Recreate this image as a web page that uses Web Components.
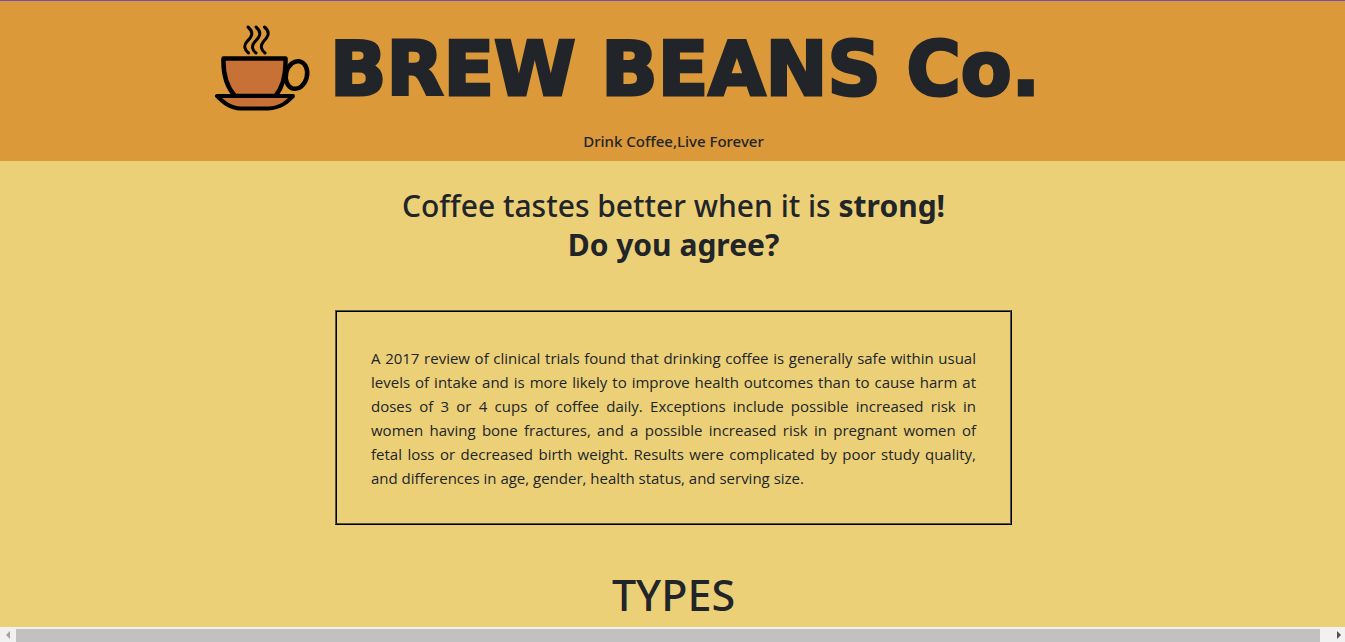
<!DOCTYPE html>
<html lang="en">
<head>
<meta charset="utf-8">
<title>Brew Beans Co.</title>
<style>
body { margin: 0; background: #ebd077; color: #212529; font: 400 16px/24px "Open Sans", "Noto Sans", sans-serif; }
</style>
</head>
<body>
<brew-page>
  <brew-header slot="header">
    <coffee-logo slot="logo"></coffee-logo>
    BREW BEANS Co.
    <span slot="tagline">Drink Coffee,Live Forever</span>
  </brew-header>
  <brew-claim>Coffee tastes better when it is <strong>strong!<br>Do you agree?</strong></brew-claim>
  <brew-note>A 2017 review of clinical trials found that drinking coffee is generally safe within usual levels of intake and is more likely to improve health outcomes than to cause harm at doses of 3 or 4 cups of coffee daily. Exceptions include possible increased risk in women having bone fractures, and a possible increased risk in pregnant women of fetal loss or decreased birth weight. Results were complicated by poor study quality, and differences in age, gender, health status, and serving size.</brew-note>
  <brew-section-title>TYPES</brew-section-title>
  <scroll-strip slot="footer"></scroll-strip>
</brew-page>
<script>
function define(name, html) {
  const template = document.createElement('template');
  template.innerHTML = html;
  customElements.define(name, class extends HTMLElement {
    constructor() {
      super();
      this.attachShadow({ mode: 'open' }).append(template.content.cloneNode(true));
    }
  });
}

define('brew-page', `
<style>
:host { display: flex; flex-direction: column; height: 100vh; }
main { flex: 1; min-height: 0; overflow: hidden; display: flex; flex-direction: column; align-items: center; padding-left: 2px; }
</style>
<slot name="header"></slot>
<main><slot></slot></main>
<slot name="footer"></slot>`);

define('brew-header', `
<style>
:host { display: block; background: #db993a; border-top: 1px solid #6f52b5; padding: 20px 0 8px; }
.brand { display: grid; grid-template-columns: 312px 1fr; column-gap: 18px; align-items: start; }
.logo { display: flex; justify-content: flex-end; }
h1 { margin: 0; font: 700 74px/96px "DejaVu Sans", sans-serif; white-space: nowrap; -webkit-text-stroke: 3px currentColor; }
p { margin: 12px 0 0; padding-left: 2px; text-align: center; font: 500 15px/24px "Noto Sans", sans-serif; }
</style>
<div class="brand">
  <div class="logo"><slot name="logo"></slot></div>
  <h1><slot></slot></h1>
</div>
<p><slot name="tagline"></slot></p>`);

define('coffee-logo', `
<style>
:host { display: block; width: 100px; height: 96px; }
svg { display: block; }
</style>
<svg width="100" height="96" viewBox="212 21 100 96" fill="none" stroke="#000" stroke-linecap="round" stroke-linejoin="round" aria-label="Cup of coffee" role="img">
  <path d="M248 27C255 33 251 38 247 41.500C243 46 245 50 248.500 53M256 27C263 33 259 38 255 41.500C251 46 252 50 256 53M264.500 27C271.500 33 267 38 263.500 41.500C260 46 261 50 265 53" stroke-width="3"/>
  <ellipse cx="296.500" cy="75" rx="10.500" ry="14" transform="rotate(14 296.500 75)" stroke-width="4.500"/>
  <path d="M223.500 58.500H285.500C286 74 283 87 275.500 96H235C226 86 223 73 223.500 58.500Z" fill="#c87137" stroke-width="4.500"/>
  <path d="M217 96H293C288 101 282 108 268 108.500H241C229 108 222 101 217 96Z" fill="#c87137" stroke-width="4"/>
</svg>`);

define('brew-claim', `
<style>
:host { display: block; margin-top: 25px; text-align: center; }
h2 { margin: 0; font: 500 30px/39px "Noto Sans", sans-serif; }
</style>
<h2><slot></slot></h2>`);

define('brew-note', `
<style>
:host { display: block; box-sizing: border-box; width: 677px; max-width: 100%; margin-top: 46px; padding: 34px 34px 33px; border: 2px ridge #000; }
p { margin: 0; font-size: 15px; line-height: 24px; text-align: justify; }
</style>
<p><slot></slot></p>`);

define('brew-section-title', `
<style>
:host { display: block; margin-top: 42px; }
h2 { margin: 0; font: 500 43px/56px "Noto Sans", sans-serif; }
</style>
<h2><slot></slot></h2>`);

define('scroll-strip', `
<style>
:host { display: flex; align-items: center; height: 15px; background: #f1f1f1; }
.end { width: 16px; display: flex; justify-content: center; }
.end:last-child { width: 12px; }
.track { flex: 1; padding-top: 2px; }
.thumb { width: 99%; height: 13px; background: #c1c1c1; }
svg { display: block; }
</style>
<span class="end"><svg width="6" height="8"><path d="M5 0V8L1 4Z" fill="#a3a3a3"/></svg></span>
<span class="track"><div class="thumb"></div></span>
<span class="end"><svg width="6" height="8"><path d="M1 0V8L5 4Z" fill="#505050"/></svg></span>`);
</script>
</body>
</html>
